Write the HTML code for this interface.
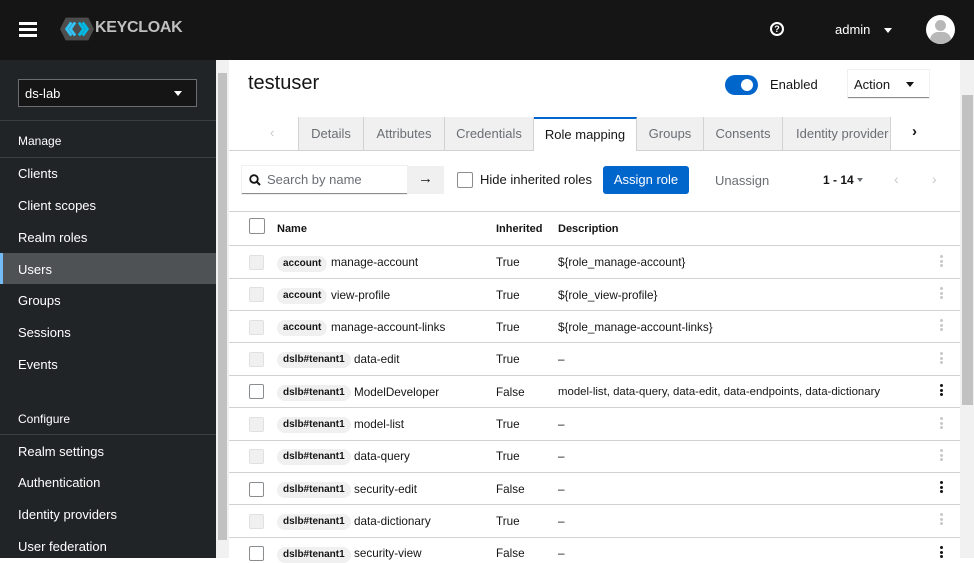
<!DOCTYPE html>
<html><head><meta charset="utf-8"><style>
*{box-sizing:border-box;margin:0;padding:0}
body{width:974px;height:558px;overflow:hidden;font-family:"Liberation Sans",sans-serif;background:#fff;position:relative;color:#151515}
.a{position:absolute;white-space:nowrap}
.hdr{left:0;top:0;width:974px;height:60px;background:#151515}
.side{left:0;top:60px;width:216px;height:498px;background:#212427}
.si{position:absolute;left:18px;color:#fff;font-size:13px}
.sep{position:absolute;left:0;width:216px;height:1px;background:#3c3f42}
.tab{position:absolute;top:117px;height:33px;background:#f0f0f0;border-right:1px solid #d2d2d2;color:#6a6e73;font-size:13px;line-height:33px;text-align:center}
.row{position:absolute;left:229px;width:731px;height:1px;background:#d2d2d2}
.cb{position:absolute;left:249px;width:15px;height:15px;border:1px solid #8a8d90;border-radius:2px;background:#fff}
.cb.d{background:#f0f0f0;border-color:#e0e0e0}
.bd{position:absolute;left:277px;height:16px;margin-top:1px;background:#f0f0f0;border-radius:8px;font-size:10px;font-weight:bold;line-height:16px;padding:0 6px;color:#151515}
.t{position:absolute;font-size:11.7px;color:#151515;margin-top:1px}
.k{position:absolute;left:940px;width:3px}
.k i{display:block;width:3px;height:3px;border-radius:50%;margin-bottom:1.5px}
</style></head><body>
<div class="a hdr"></div>
<div class="a" style="left:19px;top:22px;width:18px;height:3px;background:#fff;box-shadow:0 6px 0 #fff,0 12px 0 #fff"></div>
<svg class="a" style="left:60px;top:17px" width="34" height="24" viewBox="0 0 36 24"><polygon points="6,0 30,0 36,12 30,24 6,24 0,12" fill="#4d4d4d"/><path d="M12 5 L7 12 L12 19 M16 5 L11 12 L16 19" stroke="#33c3f4" stroke-width="3" fill="none"/><path d="M20 5 L25 12 L20 19 M24 5 L29 12 L24 19" stroke="#00b9e4" stroke-width="3" fill="none"/></svg>
<div class="a" style="left:95px;top:19px;color:#bfbfbf;font-size:16px;font-weight:bold;letter-spacing:-0.3px">KEYCLOAK</div>
<div class="a" style="left:770px;top:22px;width:14px;height:14px;border:2px solid #fff;border-radius:50%;color:#fff;font-size:9px;font-weight:bold;text-align:center;line-height:10px">?</div>
<div class="a" style="left:835px;top:22px;color:#fff;font-size:13px">admin</div>
<div class="a" style="left:884px;top:28px;border-left:4px solid transparent;border-right:4px solid transparent;border-top:5px solid #fff"></div>
<div class="a" style="left:926px;top:15px;width:29px;height:29px;border-radius:50%;background:#fff;overflow:hidden"><div style="position:absolute;left:9px;top:5px;width:11px;height:11px;border-radius:50%;background:#b8b8b8"></div><div style="position:absolute;left:4px;top:17px;width:21px;height:14px;border-radius:8px 8px 0 0;background:#b8b8b8"></div></div>

<div class="a side"></div>
<div class="a" style="left:18px;top:79px;width:179px;height:28px;background:#151515;border:1px solid #6a6e73"></div>
<div class="a" style="left:25px;top:86px;color:#fff;font-size:13px">ds-lab</div>
<div class="a" style="left:174px;top:91px;border-left:4px solid transparent;border-right:4px solid transparent;border-top:5px solid #fff"></div>
<div class="sep" style="top:120px"></div>
<div class="si" style="top:134px;font-size:12px">Manage</div>
<div class="sep" style="top:157px"></div>
<div class="si" style="top:166px">Clients</div>
<div class="si" style="top:198px">Client scopes</div>
<div class="si" style="top:230px">Realm roles</div>
<div class="a" style="left:0;top:253px;width:216px;height:31px;background:#4f5255;border-left:3px solid #73bcf7"></div>
<div class="si" style="top:262px">Users</div>
<div class="si" style="top:293px">Groups</div>
<div class="si" style="top:325px">Sessions</div>
<div class="si" style="top:357px">Events</div>
<div class="si" style="top:412px;font-size:12px">Configure</div>
<div class="sep" style="top:434px"></div>
<div class="si" style="top:444px">Realm settings</div>
<div class="si" style="top:475px">Authentication</div>
<div class="si" style="top:507px">Identity providers</div>
<div class="si" style="top:539px">User federation</div>
<div class="a" style="left:216px;top:60px;width:13px;height:498px;background:#f1f1f1"></div>
<div class="a" style="left:218px;top:73px;width:9px;height:467px;background:#c1c1c1"></div>
<div class="a" style="left:960px;top:60px;width:14px;height:498px;background:#f1f1f1"></div>
<div class="a" style="left:962px;top:95px;width:11px;height:310px;background:#c1c1c1"></div>

<div class="a" style="left:248px;top:72px;font-size:20px">testuser</div>
<div class="a" style="left:725px;top:75px;width:33px;height:20px;border-radius:10px;background:#0066cc"></div>
<div class="a" style="left:741px;top:79px;width:12px;height:12px;border-radius:50%;background:#fff"></div>
<div class="a" style="left:770px;top:77px;font-size:13px;color:#151515">Enabled</div>
<div class="a" style="left:848px;top:70px;width:81px;height:28px;border-bottom:1px solid #8a8d90;box-shadow:0 0 0 1px #f0f0f0"></div>
<div class="a" style="left:854px;top:77px;font-size:13px">Action</div>
<div class="a" style="left:906px;top:82px;border-left:4px solid transparent;border-right:4px solid transparent;border-top:5px solid #151515"></div>

<div class="a" style="left:229px;top:150px;width:731px;height:1px;background:#d2d2d2"></div>
<div class="a" style="left:270px;top:125px;color:#c8c8c8;font-size:13px">&lsaquo;</div>
<div class="tab" style="left:298px;width:66px;border-left:1px solid #d2d2d2">Details</div>
<div class="tab" style="left:364px;width:81px">Attributes</div>
<div class="tab" style="left:445px;width:89px">Credentials</div>
<div class="tab" style="left:534px;width:103px;background:#fff;color:#151515;border-top:2px solid #0066cc;height:34px;line-height:31px">Role mapping</div>
<div class="tab" style="left:637px;width:67px">Groups</div>
<div class="tab" style="left:704px;width:79px">Consents</div>
<div class="tab" style="left:783px;width:108px;text-align:left;padding-left:13px;overflow:hidden">Identity provider</div>
<div class="a" style="left:912px;top:123px;font-size:15px;font-weight:bold">&rsaquo;</div>

<div class="a" style="left:242px;top:166px;width:165px;height:28px;border-bottom:1px solid #8a8d90;box-shadow:0 0 0 1px #f0f0f0"></div>
<svg class="a" style="left:249px;top:174px" width="12" height="12" viewBox="0 0 12 12"><circle cx="5" cy="5" r="3.8" stroke="#151515" stroke-width="1.8" fill="none"/><path d="M8 8 L11 11" stroke="#151515" stroke-width="2"/></svg>
<div class="a" style="left:267px;top:172px;font-size:13px;color:#6a6e73">Search by name</div>
<div class="a" style="left:407px;top:166px;width:37px;height:28px;background:#f0f0f0"></div>
<div class="a" style="left:418px;top:170px;font-size:15px;color:#151515">&rarr;</div>
<div class="a" style="left:457px;top:172px;width:16px;height:16px;border:1px solid #8a8d90;border-radius:2px"></div>
<div class="a" style="left:480px;top:172px;font-size:13px">Hide inherited roles</div>
<div class="a" style="left:603px;top:166px;width:86px;height:28px;background:#0066cc;border-radius:3px;color:#fff;font-size:13px;text-align:center;line-height:28px">Assign role</div>
<div class="a" style="left:715px;top:173px;font-size:13px;color:#6a6e73">Unassign</div>
<div class="a" style="left:823px;top:173px;font-size:12px;font-weight:bold">1 - 14</div>
<div class="a" style="left:857px;top:178px;border-left:3.5px solid transparent;border-right:3.5px solid transparent;border-top:4px solid #6a6e73"></div>
<div class="a" style="left:894px;top:171px;color:#c8c8c8;font-size:14px">&lsaquo;</div>
<div class="a" style="left:932px;top:171px;color:#c8c8c8;font-size:14px">&rsaquo;</div>

<div class="row" style="top:211px"></div>
<div class="cb" style="top:218px;width:16px;height:16px"></div>
<div class="t" style="left:277px;top:222px;font-weight:bold;font-size:11px">Name</div>
<div class="t" style="left:496px;top:222px;font-weight:bold;font-size:11px">Inherited</div>
<div class="t" style="left:558px;top:222px;font-weight:bold;font-size:11px">Description</div>
<div class="row" style="top:245px"></div>

<div class="cb d" style="top:255px"></div><div class="bd" style="top:255px">account</div><div class="t" style="left:331px;top:255px">manage-account</div><div class="t" style="left:496px;top:255px">True</div><div class="t" style="left:558px;top:255px">${role_manage-account}</div>
<div class="k" style="top:255px"><i style="background:#c8c8c8"></i><i style="background:#c8c8c8"></i><i style="background:#c8c8c8"></i></div>
<div class="row" style="top:278px"></div>
<div class="cb d" style="top:287px"></div><div class="bd" style="top:287px">account</div><div class="t" style="left:331px;top:288px">view-profile</div><div class="t" style="left:496px;top:288px">True</div><div class="t" style="left:558px;top:288px">${role_view-profile}</div>
<div class="k" style="top:287px"><i style="background:#c8c8c8"></i><i style="background:#c8c8c8"></i><i style="background:#c8c8c8"></i></div>
<div class="row" style="top:310px"></div>
<div class="cb d" style="top:320px"></div><div class="bd" style="top:319px">account</div><div class="t" style="left:331px;top:320px">manage-account-links</div><div class="t" style="left:496px;top:320px">True</div><div class="t" style="left:558px;top:320px">${role_manage-account-links}</div>
<div class="k" style="top:319px"><i style="background:#c8c8c8"></i><i style="background:#c8c8c8"></i><i style="background:#c8c8c8"></i></div>
<div class="row" style="top:342px"></div>
<div class="cb d" style="top:352px"></div><div class="bd" style="top:351px">dslb#tenant1</div><div class="t" style="left:354px;top:352px">data-edit</div><div class="t" style="left:496px;top:352px">True</div><div class="t" style="left:558px;top:352px">–</div>
<div class="k" style="top:352px"><i style="background:#c8c8c8"></i><i style="background:#c8c8c8"></i><i style="background:#c8c8c8"></i></div>
<div class="row" style="top:375px"></div>
<div class="cb" style="top:384px"></div><div class="bd" style="top:384px">dslb#tenant1</div><div class="t" style="left:354px;top:385px">ModelDeveloper</div><div class="t" style="left:496px;top:385px">False</div><div class="t" style="left:558px;top:385px;font-size:11.4px">model-list, data-query, data-edit, data-endpoints, data-dictionary</div>
<div class="k" style="top:384px"><i style="background:#151515"></i><i style="background:#151515"></i><i style="background:#151515"></i></div>
<div class="row" style="top:407px"></div>
<div class="cb d" style="top:417px"></div><div class="bd" style="top:416px">dslb#tenant1</div><div class="t" style="left:354px;top:417px">model-list</div><div class="t" style="left:496px;top:417px">True</div><div class="t" style="left:558px;top:417px">–</div>
<div class="k" style="top:417px"><i style="background:#c8c8c8"></i><i style="background:#c8c8c8"></i><i style="background:#c8c8c8"></i></div>
<div class="row" style="top:440px"></div>
<div class="cb d" style="top:449px"></div><div class="bd" style="top:448px">dslb#tenant1</div><div class="t" style="left:354px;top:449px">data-query</div><div class="t" style="left:496px;top:449px">True</div><div class="t" style="left:558px;top:449px">–</div>
<div class="k" style="top:449px"><i style="background:#c8c8c8"></i><i style="background:#c8c8c8"></i><i style="background:#c8c8c8"></i></div>
<div class="row" style="top:472px"></div>
<div class="cb" style="top:482px"></div><div class="bd" style="top:481px">dslb#tenant1</div><div class="t" style="left:354px;top:482px">security-edit</div><div class="t" style="left:496px;top:482px">False</div><div class="t" style="left:558px;top:482px">–</div>
<div class="k" style="top:481px"><i style="background:#151515"></i><i style="background:#151515"></i><i style="background:#151515"></i></div>
<div class="row" style="top:504px"></div>
<div class="cb d" style="top:514px"></div><div class="bd" style="top:513px">dslb#tenant1</div><div class="t" style="left:354px;top:514px">data-dictionary</div><div class="t" style="left:496px;top:514px">True</div><div class="t" style="left:558px;top:514px">–</div>
<div class="k" style="top:513px"><i style="background:#c8c8c8"></i><i style="background:#c8c8c8"></i><i style="background:#c8c8c8"></i></div>
<div class="row" style="top:537px"></div>
<div class="cb" style="top:546px"></div><div class="bd" style="top:546px">dslb#tenant1</div><div class="t" style="left:354px;top:546px">security-view</div><div class="t" style="left:496px;top:546px">False</div><div class="t" style="left:558px;top:546px">–</div>
<div class="k" style="top:546px"><i style="background:#151515"></i><i style="background:#151515"></i><i style="background:#151515"></i></div>
</body></html>
